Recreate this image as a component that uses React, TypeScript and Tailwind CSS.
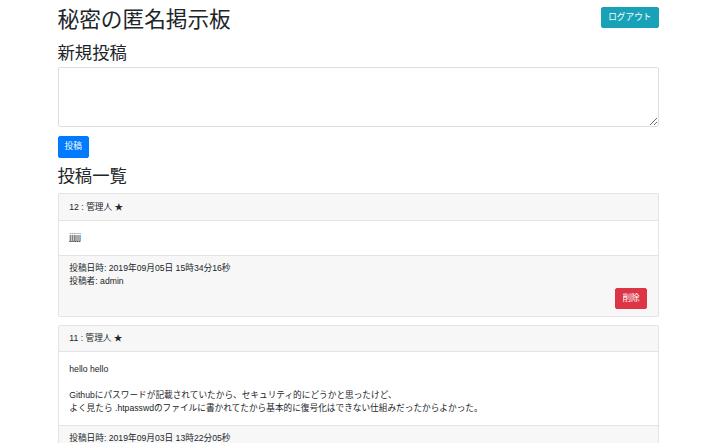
import React from "react";

const font = { fontFamily: '"Liberation Sans", "Noto Sans CJK JP", sans-serif' };

function Card({ head, body, date, author }: { head: string; body: React.ReactNode; date: string; author: string }) {
  return (
    <div className="mb-[8px] rounded-[2px] border border-[#e3e3e3] text-[8.66px] leading-[13px] text-[#212529]">
      <div className="border-b border-[#e3e3e3] bg-[#f7f7f7] px-[10.8px] py-[6.3px]">{head}</div>
      <div className="px-[10.8px] py-[10.3px]">{body}</div>
      <div className="border-t border-[#e3e3e3] bg-[#f7f7f7] px-[10.8px] py-[6.3px]">
        <div>投稿日時: {date}</div>
        <div>投稿者: {author}</div>
        <div className="flex justify-end">
          <button className="rounded-[2px] border border-[#dc3545] bg-[#dc3545] px-[6px] py-[3.2px] text-[8.66px] leading-[13px] text-white">削除</button>
        </div>
      </div>
    </div>
  );
}

export default function App() {
  return (
    <div className="min-h-[443px] bg-white" style={font}>
      <div className="ml-[57.5px] w-[601px] pt-[7px]">
        <div className="flex items-start justify-between">
          <h1 className="text-[21.66px] leading-[26px] text-[#212529]">秘密の匿名掲示板</h1>
          <button className="rounded-[2px] border border-[#17a2b8] bg-[#17a2b8] px-[6px] py-[3.2px] text-[8.66px] leading-[13px] text-white">ログアウト</button>
        </div>
        <h2 className="mt-[9.5px] text-[17.33px] leading-[20.8px] text-[#212529]">新規投稿</h2>
        <textarea className="mt-[4px] block h-[60px] w-full rounded-[2px] border border-[#dcdfe3] bg-white" />
        <button className="mt-[9px] rounded-[2px] border border-[#007bff] bg-[#007bff] px-[6px] py-[3.2px] text-[8.66px] leading-[13px] text-white">投稿</button>
        <h2 className="mt-[8px] text-[17.33px] leading-[20.8px] text-[#212529]">投稿一覧</h2>
        <div className="mt-[7px]">
          <Card head="12 : 管理人 ★" body="jjjjjj" date="2019年09月05日 15時34分16秒" author="admin" />
          <Card
            head="11 : 管理人 ★"
            body={
              <>
                hello hello
                <br />
                <br />
                Githubにパスワードが記載されていたから、セキュリティ的にどうかと思ったけど、
                <br />
                よく見たら .htpasswdのファイルに書かれてたから基本的に復号化はできない仕組みだったからよかった。
              </>
            }
            date="2019年09月03日 13時22分05秒"
            author="admin"
          />
        </div>
      </div>
    </div>
  );
}
